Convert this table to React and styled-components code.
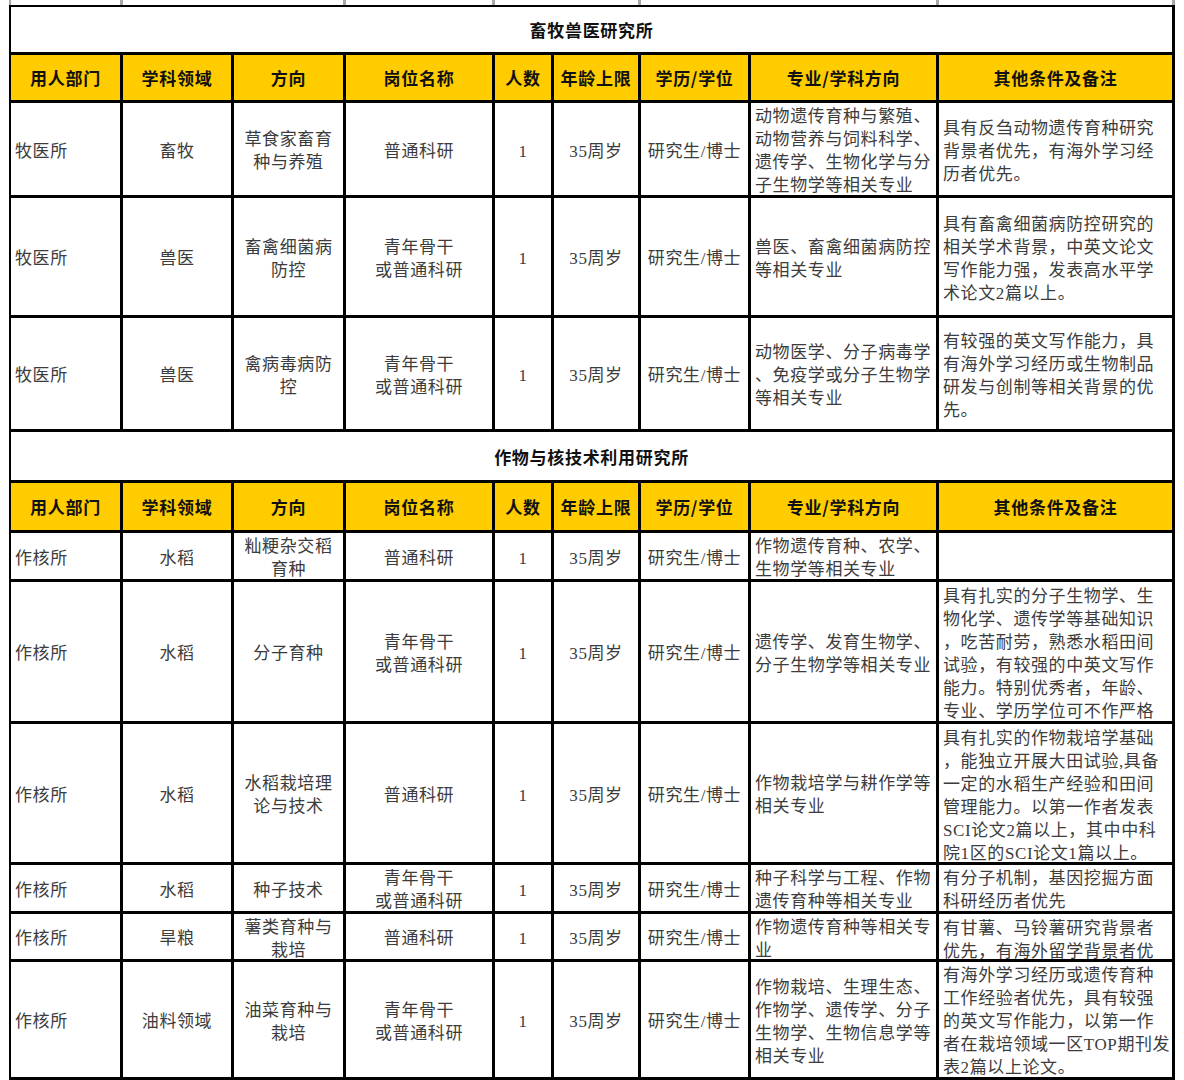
import React from "react";
import styled, { createGlobalStyle } from "styled-components";

const COLS = "109px 108px 109px 146px 56px 84px 107px 185px 233px";

const HEADERS = [
    "用人部门",
    "学科领域",
    "方向",
    "岗位名称",
    "人数",
    "年龄上限",
    "学历/学位",
    "专业/学科方向",
    "其他条件及备注",
];

// left / center per column
const ALIGN = ["left", "center", "center", "center", "center", "center", "center", "left", "left"];

const sections = [
    {
        title: "畜牧兽医研究所",
        titleH: 45,
        headH: 45,
        rows: [
            {
                h: 92,
                cells: [
                    "牧医所",
                    "畜牧",
                    "草食家畜育\n种与养殖",
                    "普通科研",
                    "1",
                    "35周岁",
                    "研究生/博士",
                    "动物遗传育种与繁殖、\n动物营养与饲料科学、\n遗传学、生物化学与分\n子生物学等相关专业",
                    "具有反刍动物遗传育种研究\n背景者优先，有海外学习经\n历者优先。",
                ],
            },
            {
                h: 117,
                cells: [
                    "牧医所",
                    "兽医",
                    "畜禽细菌病\n防控",
                    "青年骨干\n或普通科研",
                    "1",
                    "35周岁",
                    "研究生/博士",
                    "兽医、畜禽细菌病防控\n等相关专业",
                    "具有畜禽细菌病防控研究的\n相关学术背景，中英文论文\n写作能力强，发表高水平学\n术论文2篇以上。",
                ],
            },
            {
                h: 111,
                cells: [
                    "牧医所",
                    "兽医",
                    "禽病毒病防\n控",
                    "青年骨干\n或普通科研",
                    "1",
                    "35周岁",
                    "研究生/博士",
                    "动物医学、分子病毒学\n、免疫学或分子生物学\n等相关专业",
                    "有较强的英文写作能力，具\n有海外学习经历或生物制品\n研发与创制等相关背景的优\n先。",
                ],
            },
        ],
    },
    {
        title: "作物与核技术利用研究所",
        titleH: 48,
        headH: 47,
        rows: [
            {
                h: 46,
                cells: [
                    "作核所",
                    "水稻",
                    "籼粳杂交稻\n育种",
                    "普通科研",
                    "1",
                    "35周岁",
                    "研究生/博士",
                    "作物遗传育种、农学、\n生物学等相关专业",
                    "",
                ],
            },
            {
                h: 139,
                clip: true,
                cells: [
                    "作核所",
                    "水稻",
                    "分子育种",
                    "青年骨干\n或普通科研",
                    "1",
                    "35周岁",
                    "研究生/博士",
                    "遗传学、发育生物学、\n分子生物学等相关专业",
                    "具有扎实的分子生物学、生\n物化学、遗传学等基础知识\n，吃苦耐劳，熟悉水稻田间\n试验，有较强的中英文写作\n能力。特别优秀者，年龄、\n专业、学历学位可不作严格\n要求。",
                ],
            },
            {
                h: 138,
                clip: true,
                cells: [
                    "作核所",
                    "水稻",
                    "水稻栽培理\n论与技术",
                    "普通科研",
                    "1",
                    "35周岁",
                    "研究生/博士",
                    "作物栽培学与耕作学等\n相关专业",
                    "具有扎实的作物栽培学基础\n，能独立开展大田试验,具备\n一定的水稻生产经验和田间\n管理能力。以第一作者发表\nSCI论文2篇以上，其中中科\n院1区的SCI论文1篇以上。",
                ],
            },
            {
                h: 46,
                cells: [
                    "作核所",
                    "水稻",
                    "种子技术",
                    "青年骨干\n或普通科研",
                    "1",
                    "35周岁",
                    "研究生/博士",
                    "种子科学与工程、作物\n遗传育种等相关专业",
                    "有分子机制，基因挖掘方面\n科研经历者优先",
                ],
            },
            {
                h: 45,
                clip: true,
                cells: [
                    "作核所",
                    "旱粮",
                    "薯类育种与\n栽培",
                    "普通科研",
                    "1",
                    "35周岁",
                    "研究生/博士",
                    "作物遗传育种等相关专\n业",
                    "有甘薯、马铃薯研究背景者\n优先，有海外留学背景者优\n先。",
                ],
            },
            {
                h: 115,
                cells: [
                    "作核所",
                    "油料领域",
                    "油菜育种与\n栽培",
                    "青年骨干\n或普通科研",
                    "1",
                    "35周岁",
                    "研究生/博士",
                    "作物栽培、生理生态、\n作物学、遗传学、分子\n生物学、生物信息学等\n相关专业",
                    "有海外学习经历或遗传育种\n工作经验者优先，具有较强\n的英文写作能力，以第一作\n者在栽培领域一区TOP期刊发\n表2篇以上论文。",
                ],
            },
        ],
    },
];

const App = () => {
    return (
        <Page>
            <GlobalStyle />
            <Sliver>
                {[1, 2, 1, 2, 2, 1].map((span, i) => (
                    <SliverCell key={i} $span={span} />
                ))}
            </Sliver>
            <Sheet>
                {sections.map((section) => (
                    <React.Fragment key={section.title}>
                        <Title $h={section.titleH}>{section.title}</Title>
                        {HEADERS.map((label) => (
                            <Head key={label} $h={section.headH}>
                                {label}
                            </Head>
                        ))}
                        {section.rows.map((row, r) =>
                            row.cells.map((text, c) => (
                                <Cell
                                    key={`${r}-${c}`}
                                    $h={row.h}
                                    $align={ALIGN[c]}
                                    $top={row.clip && c === 8}>
                                    {text.split("\n").map((line, i) => (
                                        <Line key={i}>{line}</Line>
                                    ))}
                                </Cell>
                            ))
                        )}
                    </React.Fragment>
                ))}
            </Sheet>
        </Page>
    );
};

export default App;

const GlobalStyle = createGlobalStyle`
    body {
        margin: 0;
        background: #fff;
    }
`;

const Page = styled.div`
    padding-left: 9px;
`;

const Sliver = styled.div`
    display: grid;
    grid-template-columns: ${COLS};
    column-gap: 3px;
    width: fit-content;
    height: 5px;
    padding: 0 3px 0 2px;
    background: #a8a8a8;
`;

const SliverCell = styled.div`
    grid-column: span ${(p) => p.$span};
    background: #fff;
`;

const Sheet = styled.div`
    display: grid;
    grid-template-columns: ${COLS};
    gap: 3px;
    width: fit-content;
    padding: 2px 3px 3px 2px;
    background: #000;
`;

const Title = styled.div`
    grid-column: 1 / -1;
    height: ${(p) => p.$h}px;
    background: #fff;
    display: flex;
    align-items: center;
    justify-content: center;
    font-family: "Noto Sans CJK SC", sans-serif;
    font-weight: 700;
    font-size: 17px;
    letter-spacing: 0.7px;
    color: #111;
`;

const Head = styled.div`
    height: ${(p) => p.$h}px;
    background: #ffcc00;
    display: flex;
    align-items: center;
    justify-content: center;
    font-family: "Noto Sans CJK SC", sans-serif;
    font-weight: 700;
    font-size: 17px;
    letter-spacing: 0.7px;
    color: #111;
    white-space: nowrap;
`;

const Cell = styled.div`
    box-sizing: border-box;
    height: ${(p) => p.$h}px;
    background: #fff;
    overflow: hidden;
    display: flex;
    flex-direction: column;
    justify-content: ${(p) => (p.$top ? "flex-start" : "center")};
    align-items: ${(p) => (p.$align === "left" ? "flex-start" : "center")};
    padding-top: ${(p) => (p.$top ? "3px" : "4px")};
    padding-left: ${(p) => (p.$align === "left" ? "4px" : "2px")};
    padding-right: ${(p) => (p.$align === "left" ? "0" : "2px")};
    font-family: "Liberation Serif", "Noto Sans CJK SC", serif;
    font-size: 17px;
    letter-spacing: 0.6px;
    line-height: 23px;
    color: #3c3c3c;
    white-space: nowrap;
`;

const Line = styled.span`
    display: block;
    flex-shrink: 0;
`;
